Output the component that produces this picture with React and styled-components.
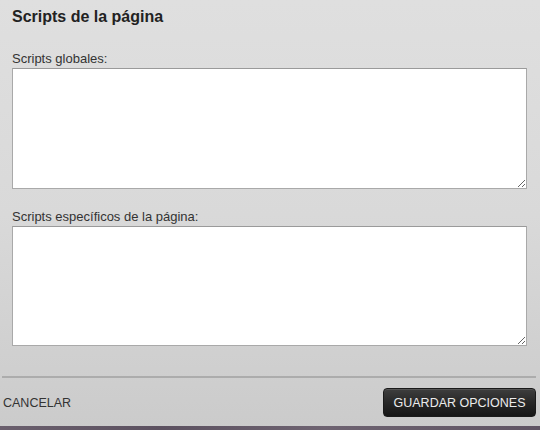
import React from "react";
import styled, { createGlobalStyle } from "styled-components";

const Global = createGlobalStyle`
  html, body { margin: 0; padding: 0; }
  body { font-family: "Liberation Sans", Arial, sans-serif; }
`;

const Page = styled.div`
  width: 540px;
  height: 430px;
  box-sizing: border-box;
  display: flex;
  flex-direction: column;
  background: linear-gradient(to bottom, #dfdfdf 0%, #d9d9d9 50%, #cbcbcb 100%);
  overflow: hidden;
`;

const Body = styled.div`
  padding: 8px 13px 0 12px;
  display: flex;
  flex-direction: column;
`;

const Title = styled.h2`
  margin: 0;
  font-size: 16px;
  line-height: 18px;
  font-weight: bold;
  color: #222;
`;

const Field = styled.div`
  display: flex;
  flex-direction: column;
  margin-top: ${(p) => p.$top}px;
`;

const Label = styled.label`
  font-size: 13px;
  line-height: 16px;
  color: #333;
  margin-bottom: 1px;
`;

const Area = styled.textarea`
  box-sizing: border-box;
  width: 515px;
  height: ${(p) => p.$h}px;
  margin: 0;
  border: 1px solid #a9a9a9;
  border-top-color: #9a9a9a;
  background: #fff;
  resize: vertical;
  font-family: "Liberation Mono", monospace;
  font-size: 12px;
  padding: 2px;
  display: block;
`;

const Divider = styled.hr`
  margin: 30px 4px 0 2px;
  border: 0;
  height: 2px;
  background: #acacac;
`;

const Footer = styled.div`
  display: flex;
  align-items: center;
  justify-content: space-between;
  padding: 10px 4px 0 3px;
`;

const Cancel = styled.button`
  border: 0;
  background: none;
  padding: 0;
  font-family: "Liberation Sans", Arial, sans-serif;
  font-size: 12.5px;
  color: #333;
  cursor: pointer;
`;

const Save = styled.button`
  box-sizing: border-box;
  height: 29px;
  width: 153px;
  border: 1px solid #1a1a1a;
  border-radius: 4px;
  background: linear-gradient(to bottom, #3e3e3e 0%, #272727 50%, #161616 100%);
  box-shadow: inset 0 1px 0 rgba(255, 255, 255, 0.12);
  color: #ececec;
  font-family: "Liberation Sans", Arial, sans-serif;
  font-size: 12.5px;
  padding: 0;
  cursor: pointer;
`;

const Spacer = styled.div`
  flex: 1;
`;

const EdgeStrip = styled.div`
  height: 4px;
  background: linear-gradient(to right, #6a5f6d, #5c5160 30%, #6e6371 60%, #5f5463);
`;

export default function App() {
  return (
    <>
      <Global />
      <Page>
        <Body>
          <Title>Scripts de la página</Title>
          <Field $top={25}>
            <Label>Scripts globales:</Label>
            <Area $h={121} />
          </Field>
          <Field $top={20}>
            <Label>Scripts específicos de la página:</Label>
            <Area $h={120} />
          </Field>
        </Body>
        <Divider />
        <Footer>
          <Cancel>CANCELAR</Cancel>
          <Save>GUARDAR OPCIONES</Save>
        </Footer>
        <Spacer />
        <EdgeStrip />
      </Page>
    </>
  );
}
